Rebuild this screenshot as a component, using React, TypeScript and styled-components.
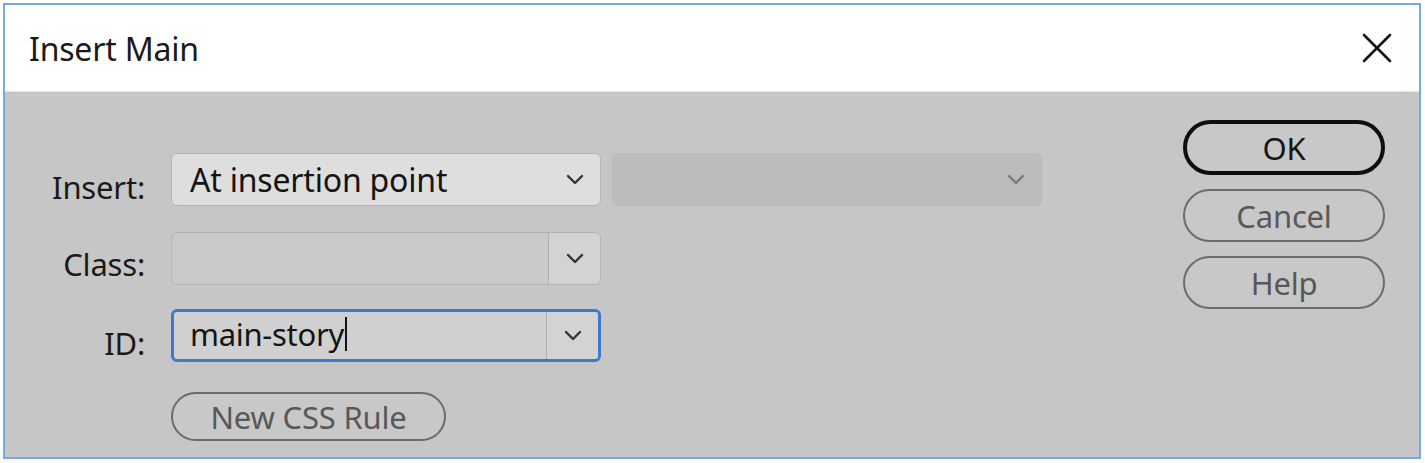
import React from "react";
import styled, { createGlobalStyle } from "styled-components";

const Global = createGlobalStyle`
  html, body { margin: 0; padding: 0; background: #ffffff; }
  body { font-family: "Noto Sans", "Open Sans", sans-serif; }
`;

const Page = styled.div`
  padding: 3px;
  width: 1425px;
  height: 463px;
  box-sizing: border-box;
`;

const Dialog = styled.div`
  width: 1418px;
  height: 456px;
  box-sizing: border-box;
  border: 2px solid #7ba8de;
  display: flex;
  flex-direction: column;
  background: #c6c6c6;
`;

const TitleBar = styled.div`
  height: 87px;
  background: #ffffff;
  display: flex;
  align-items: center;
  justify-content: space-between;
  padding: 0 26px 0 24px;
  border-bottom: 1px solid #e4e4e4;
  box-sizing: border-box;
`;

const Title = styled.div`
  font-size: 32px;
  color: #1a1a1a;
  letter-spacing: -0.2px;
`;

const CloseButton = styled.div`
  width: 32px;
  height: 32px;
  display: flex;
  align-items: center;
  justify-content: center;
`;

const Body = styled.div`
  flex: 1;
  display: flex;
  justify-content: space-between;
  padding: 0 34px 0 0;
`;

const Form = styled.div`
  display: grid;
  grid-template-columns: 110px auto;
  column-gap: 26px;
  row-gap: 0;
  padding: 61px 0 0 30px;
  align-content: start;
`;

const Label = styled.div<{ $top: number }>`
  font-size: 31px;
  line-height: 40px;
  color: #1a1a1a;
  text-align: right;
  padding-top: ${(p) => p.$top}px;
  letter-spacing: -0.2px;
`;

const ControlRow = styled.div<{ $gap: number }>`
  display: flex;
  gap: 11px;
  margin-bottom: ${(p) => p.$gap}px;
`;

const Select = styled.div<{ $disabled?: boolean }>`
  width: 430px;
  height: 53px;
  box-sizing: border-box;
  border-radius: 6px;
  border: 1px solid ${(p) => (p.$disabled ? "#b9b9b9" : "#b3b3b3")};
  background: ${(p) => (p.$disabled ? "#bcbcbc" : "#dedede")};
  display: flex;
  align-items: center;
  justify-content: space-between;
  padding: 0 16px 0 18px;
  font-size: 32px;
  color: #141414;
  letter-spacing: -0.2px;
`;

const Combo = styled.div<{ $focused?: boolean }>`
  width: 430px;
  height: 53px;
  box-sizing: border-box;
  border-radius: 6px;
  border: ${(p) => (p.$focused ? "3px solid #3d79cf" : "1px solid #b3b3b3")};
  background: ${(p) => (p.$focused ? "#d0d0d0" : "#c9c9c9")};
  display: flex;
  overflow: hidden;
`;

const ComboInput = styled.div`
  flex: 1;
  display: flex;
  align-items: center;
  padding-left: 16px;
  padding-bottom: 3px;
  font-size: 31px;
  color: #141414;
  letter-spacing: -0.3px;
`;

const Caret = styled.span`
  display: inline-block;
  width: 2px;
  height: 34px;
  background: #111;
  margin-left: 1px;
`;

const ComboButton = styled.div`
  width: 51px;
  border-left: 1px solid #b0b0b0;
  background: #d3d3d3;
  display: flex;
  align-items: center;
  justify-content: center;
`;

const PillButton = styled.div<{ $primary?: boolean; $width: number }>`
  width: ${(p) => p.$width}px;
  height: ${(p) => (p.$primary ? 55 : 53)}px;
  box-sizing: border-box;
  border-radius: 30px;
  border: ${(p) => (p.$primary ? "4px solid #0e0e0e" : "2px solid #6b6b6b")};
  background: #c8c8c8;
  display: flex;
  align-items: center;
  justify-content: center;
  font-size: 31px;
  color: ${(p) => (p.$primary ? "#151515" : "#585858")};
  letter-spacing: -0.2px;
`;

const SmallPill = styled(PillButton)`
  height: 49px;
`;

const ButtonColumn = styled.div`
  display: flex;
  flex-direction: column;
  gap: 14px;
  padding-top: 28px;
`;

const Chevron = ({ color }: { color: string }) => (
  <svg width="18" height="11" viewBox="0 0 18 11">
    <path d="M2 2 L9 9 L16 2" fill="none" stroke={color} strokeWidth="2.4" strokeLinecap="round" strokeLinejoin="round" />
  </svg>
);

export default function App() {
  return (
    <>
      <Global />
      <Page>
        <Dialog>
          <TitleBar>
            <Title>Insert Main</Title>
            <CloseButton>
              <svg width="30" height="30" viewBox="0 0 30 30">
                <path d="M2 2 L28 28 M28 2 L2 28" stroke="#111" strokeWidth="2.6" strokeLinecap="round" />
              </svg>
            </CloseButton>
          </TitleBar>
          <Body>
            <Form>
              <Label $top={14}>Insert:</Label>
              <ControlRow $gap={26}>
                <Select>
                  At insertion point
                  <Chevron color="#333" />
                </Select>
                <Select $disabled>
                  <span />
                  <Chevron color="#7a7a7a" />
                </Select>
              </ControlRow>
              <Label $top={12}>Class:</Label>
              <ControlRow $gap={24}>
                <Combo>
                  <ComboInput />
                  <ComboButton>
                    <Chevron color="#333" />
                  </ComboButton>
                </Combo>
              </ControlRow>
              <Label $top={14}>ID:</Label>
              <ControlRow $gap={30}>
                <Combo $focused>
                  <ComboInput>
                    main-story
                    <Caret />
                  </ComboInput>
                  <ComboButton>
                    <Chevron color="#333" />
                  </ComboButton>
                </Combo>
              </ControlRow>
              <span />
              <ControlRow $gap={0}>
                <SmallPill $width={275}>New CSS Rule</SmallPill>
              </ControlRow>
            </Form>
            <ButtonColumn>
              <PillButton $primary $width={202}>OK</PillButton>
              <PillButton $width={202}>Cancel</PillButton>
              <PillButton $width={202}>Help</PillButton>
            </ButtonColumn>
          </Body>
        </Dialog>
      </Page>
    </>
  );
}
